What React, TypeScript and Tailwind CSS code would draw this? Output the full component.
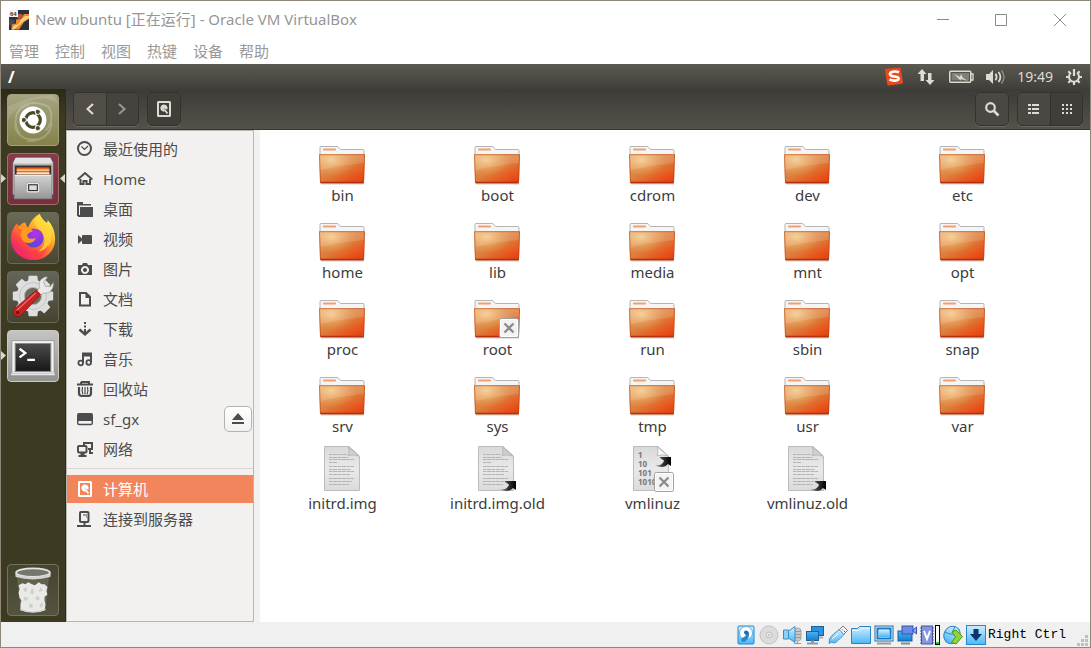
import React from "react";

type IconProps = { className?: string };

const SANS = "font-['Noto_Sans','Noto_Sans_CJK_SC',sans-serif]";

/* ---------- Host window ---------- */

function VirtualBoxLogo() {
  return (
    <svg width="20" height="20" viewBox="0 0 20 20" aria-hidden="true">
      <rect width="20" height="20" fill="#2b2f3c" />
      <path d="M0 9l5 1 1 4-4 2-2-1z" fill="#454a5a" />
      <path d="M7 9.500l5-.5 3-5h5v5l-5 3-5 7.500H2l1-5 4-1z" fill="#e98a2c" />
      <path d="M12 9.500l4-3.500h4v2l-5 3-6 5-4 3.500H3l2-4 4-1z" fill="#ffd07a" />
      <path d="M9 4h4l1 3-4 2.500-2-2z" fill="#c9502a" />
      <rect width="9" height="7" fill="#f4f4f4" />
      <text x="1" y="6" fontSize="6" fontWeight="bold" fontFamily="Liberation Sans" fill="#333">64</text>
    </svg>
  );
}

function TitleBar() {
  return (
    <header className="flex h-[37px] items-center pl-[8px]">
      <VirtualBoxLogo />
      <h1 className="ml-[6px] flex-1 pb-px text-[15px] leading-5 text-[#969696]">
        New ubuntu [正在运行] - Oracle VM VirtualBox
      </h1>
      <div className="flex text-[#8a8a8a]">
        <button aria-label="最小化" className="flex h-8 w-[58px] items-center justify-center">
          <svg width="12" height="12" viewBox="0 0 12 12"><path d="M0 5.500h12" stroke="currentColor" /></svg>
        </button>
        <button aria-label="最大化" className="flex h-8 w-[58px] items-center justify-center">
          <svg width="12" height="12" viewBox="0 0 12 12"><path d="M.5.500h11v11H.5z" fill="none" stroke="currentColor" /></svg>
        </button>
        <button aria-label="关闭" className="flex h-8 w-[60px] items-center justify-center">
          <svg width="12" height="12" viewBox="0 0 12 12"><path d="M0 0l12 12M12 0L0 12" stroke="currentColor" /></svg>
        </button>
      </div>
    </header>
  );
}

function MenuBar() {
  const menus = ["管理", "控制", "视图", "热键", "设备", "帮助"];
  return (
    <nav className="flex h-[26px] items-center gap-4 pl-2 text-[15px] leading-5 text-[#999]">
      {menus.map((m) => (
        <button key={m}>{m}</button>
      ))}
    </nav>
  );
}

/* ---------- Ubuntu top panel ---------- */

function TopPanel() {
  return (
    <div className="flex h-[25px] items-center bg-linear-to-b from-[#5b5950] to-[#403f3a] px-[7px] text-[#dfdbd2]">
      <span className="flex-1 text-[16px] leading-5 font-bold text-white">/</span>
      <div className="flex items-center">
        <svg className="mr-[13px]" width="20" height="20" viewBox="0 0 20 20" aria-label="搜狗输入法">
          <path d="M1 3.500Q.5 2 2 1.800L15 .8q1.500 0 1.800 1.400L19 15q0 1.400-1.300 1.700L5 18.500q-1.500.2-1.800-1.200z" fill="#e94a1c" />
          <path d="M15 5.200C11 3.800 6 4.600 6 7.200c0 3.300 9 1.400 8.600 4.400-.3 2.300-5.600 2.600-9.200 1" fill="none" stroke="#fff" strokeWidth="2.700" />
        </svg>
        <svg className="mr-[14px]" width="18" height="18" viewBox="0 0 18 18" aria-label="网络">
          <path d="M5 1L0.500 6H3.500V13H7V6h2.500zM13 17l4.500-5H14.500V5H11v7H8.500z" fill="currentColor" />
        </svg>
        <svg className="mr-[12px]" width="25" height="14" viewBox="0 0 25 14" aria-label="电池">
          <rect x=".75" y="1.250" width="21" height="11" rx="1" fill="none" stroke="currentColor" strokeWidth="1.500" />
          <rect x="2.500" y="3" width="17.500" height="7.500" fill="#807e77" />
          <path d="M22 4h2v6h-2" fill="none" stroke="currentColor" strokeWidth="1.300" />
          <path d="M5 4l6 3 1-3 2 4 5 3-7-2-.5 1.500L9 8z" fill="currentColor" />
        </svg>
        <svg className="mr-[11px]" width="20" height="16" viewBox="0 0 20 16" aria-label="音量">
          <path d="M0 5h3l4-4v14l-4-4H0z" fill="currentColor" />
          <path d="M9.500 4.800q2.200 3.200 0 6.400M12.500 3q3.800 5 0 10" fill="none" stroke="currentColor" strokeWidth="1.800" />
          <path d="M15.500 1.500q5 6.500 0 13" fill="none" stroke="#8c8a83" strokeWidth="1.500" />
        </svg>
        <time className="mr-[12px] text-[14px] leading-5">19:49</time>
        <button aria-label="系统菜单">
          <svg width="18" height="18" viewBox="0 0 18 18">
            <g stroke="currentColor" strokeWidth="2.200">
              <path d="M9 1v7M1 9h3M14 9h3M9 14v3M3.300 3.300l2 2M14.700 3.300l-2 2M3.300 14.700l2-2M14.700 14.700l-2-2" />
              <path d="M6 4.700a5 5 0 1 0 6 0" fill="none" strokeWidth="2" />
            </g>
          </svg>
        </button>
      </div>
    </div>
  );
}

/* ---------- Launcher ---------- */

function DashIcon() {
  return (
    <svg width="52" height="52" viewBox="0 0 52 52">
      <g fill="none" stroke="#fff" strokeOpacity=".22" strokeWidth="2">
        <path d="M8 24C10 10 24 4 42 12M12 40C4 28 8 14 22 10M30 46C14 48 6 38 8 28M45 28C46 40 36 48 20 48M42 12c5 7 4 18-3 25" />
      </g>
      <path d="M0 12Q25 0 47 0L52 8Q35 0 20 8T0 26z" fill="#fff" opacity=".12" />
      <circle cx="26" cy="26" r="14" fill="#fff" />
      <circle cx="26" cy="26" r="7.500" fill="none" stroke="#4b4a2b" strokeWidth="3.600" />
      <g stroke="#fff" strokeWidth="1.500"><path d="M26 26H14M26 26l6-10.500M26 26l6 10.500" /></g>
      <circle cx="26" cy="26" r="5.700" fill="#fff" />
      <g fill="#4b4a2b" stroke="#fff" strokeWidth="1"><circle cx="16.500" cy="26" r="2.700" /><circle cx="31" cy="17.500" r="2.700" /><circle cx="31" cy="34.500" r="2.700" /></g>
    </svg>
  );
}

function FilesIcon() {
  return (
    <svg width="52" height="52" viewBox="0 0 52 52">
      <defs>
        <linearGradient id="cab" x1="0" y1="0" x2="0" y2="1"><stop offset="0" stopColor="#d4d4d4" /><stop offset="1" stopColor="#969696" /></linearGradient>
      </defs>
      <path d="M8 4h36l3 5v33H5V9z" fill="#b5b5b5" />
      <path d="M8 4h36l2.500 6h-41z" fill="#e2e2e2" />
      <path d="M7 12h38v10H7z" fill="#3b302c" />
      <path d="M9 14h34v8H9z" fill="#e8671d" />
      <path d="M9 16h34v1.500H9zM9 19h34v2H9z" fill="#fde3b8" />
      <path d="M6.500 21.500h39v25h-39z" fill="url(#cab)" stroke="#858585" strokeWidth=".8" />
      <path d="M7 22.300h38" stroke="#eee" />
      <rect x="19" y="29.500" width="14" height="11" rx="2.500" fill="#e6e6e6" stroke="#aaa" />
      <rect x="21.500" y="32" width="9" height="6" fill="#ddd" stroke="#333" strokeWidth="1.200" />
    </svg>
  );
}

function FirefoxIcon() {
  return (
    <svg width="52" height="52" viewBox="0 0 52 52">
      <defs>
        <linearGradient id="fx1" x1=".85" y1=".1" x2=".2" y2=".95"><stop offset="0" stopColor="#fff44f" /><stop offset=".4" stopColor="#ff9a1f" /><stop offset=".7" stopColor="#ff4a3d" /><stop offset="1" stopColor="#e61587" /></linearGradient>
        <radialGradient id="fx2" cx=".6" cy=".25" r=".8"><stop offset="0" stopColor="#b833e1" /><stop offset=".6" stopColor="#7a3ce8" /><stop offset="1" stopColor="#4a4fd0" /></radialGradient>
      </defs>
      <path d="M33 1c2 5 4 6 7 9 2-1 1-2 1-3 5 5 8 12 8 20 0 13-10 22-23 22S3 39 3 27C3 20 6 15 9 11l1 4c3-3 6-5 8-5 0 0 1 4 3 5 3-8 8-12 12-14z" fill="url(#fx1)" />
      <path d="M33 1c3 8 13 13 12 26-1 8-7 12-13 13 5-4 8-10 5-17-3-6-8-8-9-12 0-5 2-8 5-10z" fill="#ffda3e" opacity=".75" />
      <circle cx="27" cy="26" r="10" fill="url(#fx2)" />
      <path d="M9 11c2 3 6 5 9 5 3-1 6 0 8 3-3 1-6 2-6 5 1 4 7 3 9 2-2 6-10 7-14 2-3-5-2-9 1-11-3 0-5-1-7-6z" fill="#ff9a1f" />
      <path d="M4 27c1 10 10 17 20 16 8 0 14-4 18-10-2 10-10 15-17 15C13 48 5 40 4 27z" fill="#ff3750" opacity=".55" />
    </svg>
  );
}

function SettingsIcon() {
  return (
    <svg width="52" height="52" viewBox="0 0 52 52">
      <g fill="#dedede">
        <circle cx="26" cy="25" r="17" />
        {[0, 45, 90, 135].map((a) => (
          <path key={a} d="M21.500 4h9l1 8h-11zM20.500 38h11l-1 8h-9z" transform={`rotate(${a} 26 25)`} />
        ))}
      </g>
      <circle cx="26" cy="25" r="14" fill="none" stroke="#c3c3c3" strokeWidth="1" />
      <circle cx="26" cy="25" r="9" fill="#6b6a58" stroke="#b5b5b5" />
      <path d="M30 20l3-4c-2-5 1-10 7-11l1 1-4 4 2 5 5 0 3-4c1 7-4 12-10 11l-4 3z" fill="#e9e9e9" stroke="#999" strokeWidth=".7" />
      <path d="M29.500 19l4.500 4.500L14 44.500c-2 2.500-5 2-7 .5-2-2-2-5 0-7z" fill="#c92222" stroke="#8f1212" strokeWidth=".8" />
      <path d="M29 21.500L9 40" stroke="#e96a6a" strokeWidth="1.300" />
      <circle cx="10" cy="42" r="1.800" fill="#7c0e0e" />
    </svg>
  );
}

function TerminalIcon() {
  return (
    <svg width="52" height="52" viewBox="0 0 52 52">
      <defs><linearGradient id="term" x1="0" y1="0" x2="0" y2="1"><stop offset="0" stopColor="#4c4c4c" /><stop offset="1" stopColor="#161616" /></linearGradient></defs>
      <path d="M4 10h44v32l1.500 4.500H2.500L4 42z" fill="#f2f2f2" stroke="#8b8b8b" strokeWidth=".8" />
      <path d="M4 42.500h44M3.500 44.500h45" stroke="#c2c2c2" />
      <rect x="7.500" y="13" width="37" height="29" fill="url(#term)" stroke="#888" />
      <path d="M12 18.500l6 4.500-6 4.500" fill="none" stroke="#fff" strokeWidth="2.400" />
      <path d="M20 30h8" stroke="#fff" strokeWidth="2.400" />
    </svg>
  );
}

function TrashIcon() {
  return (
    <svg width="52" height="52" viewBox="0 0 52 52">
      <path d="M9 10l4 36q13 5 26 0l4-36z" fill="#9b9a8c" opacity=".3" />
      <ellipse cx="26" cy="8" rx="17.500" ry="4.500" fill="#77766c" stroke="#e5e5e5" strokeWidth="2" />
      <path d="M7.500 9q18 7 37 0l-.5 3.500q-18 5-36 0z" fill="#d2d2d0" />
      <path d="M11 21l4-2 3 1 3-2 4 2 3 1 4-3 3 2 3 0 3 3-1 4 1 4-3 2 0 4 1 4-1 6q-12 4-25 0l0-6 1-4-2-3-1-5 1-4z" fill="#e9e9e7" />
      <g fill="#c5c5c1" opacity=".75">
        <path d="M16 25l3-2 1 4-3 1zM25 24l2 3-1 4-3-2zM34 23l2 4-4 1zM17 33l4 1-1 3-4 0zM28 34l4-2 1 4-3 1zM22 40l4 1-1 4-3-1zM33 41l3-2 0 5-3 0z" />
      </g>
      <path d="M13 46q13 6 26 0" fill="none" stroke="#d8d8d8" strokeWidth="1.500" />
    </svg>
  );
}

type LauncherApp = { name: string; Icon: () => React.ReactElement; tile: string; running?: boolean; focused?: boolean };

const APPS: LauncherApp[] = [
  { name: "Dash", Icon: DashIcon, tile: "bg-linear-to-b from-[#a6a482] to-[#858349] border-[#a3a17c]" },
  { name: "文件", Icon: FilesIcon, tile: "bg-linear-to-b from-[#843d48] to-[#75303e] border-[#a46a72]", running: true, focused: true },
  { name: "Firefox", Icon: FirefoxIcon, tile: "bg-linear-to-b from-[#6a6a58] to-[#494732] border-[#6a6956]" },
  { name: "系统设置", Icon: SettingsIcon, tile: "bg-linear-to-b from-[#66655a] to-[#45442f] border-[#6a6956]" },
  { name: "终端", Icon: TerminalIcon, tile: "bg-linear-to-b from-[#c4c4c3] to-[#929291] border-[#c8c8c8]", running: true },
];

function LauncherItem({ app }: { app: LauncherApp }) {
  const { Icon } = app;
  return (
    <li className="relative flex justify-center">
      {app.running && (
        <svg className="absolute top-[21px] left-0" width="5" height="9" viewBox="0 0 5 9"><path d="M0 0l5 4.500L0 9z" fill="#d9d7d0" /></svg>
      )}
      <button aria-label={app.name} className={`flex size-[52px] items-center justify-center overflow-hidden rounded border ${app.tile}`}>
        <Icon />
      </button>
      {app.focused && (
        <svg className="absolute top-[21px] right-0" width="5" height="9" viewBox="0 0 5 9"><path d="M5 0L0 4.500 5 9z" fill="#d9d7d0" /></svg>
      )}
    </li>
  );
}

function Launcher() {
  return (
    <nav className="flex w-[65px] shrink-0 flex-col justify-between border-r border-[#2e2c1c] bg-linear-to-b from-[#2b2a17] via-[#3d3a22] via-5% to-[#3d3a22] pt-[5px] pb-[6px]">
      <ul className="flex flex-col gap-[7px]">
        {APPS.map((a) => (
          <LauncherItem key={a.name} app={a} />
        ))}
      </ul>
      <ul>
        <LauncherItem app={{ name: "回收站", Icon: TrashIcon, tile: "bg-linear-to-b from-[#45442d] to-[#545340] border-[#74735f]" }} />
      </ul>
    </nav>
  );
}

/* ---------- File manager toolbar ---------- */

const line = { fill: "none", stroke: "currentColor", strokeWidth: 2 };

const DISK_ART = (
  <>
    <rect x="2" y="1" width="12" height="14" rx=".5" {...line} />
    <path d="M8 3.500A3.500 3.500 0 1 0 9 10.300L7.500 7.500 11.300 8.400A3.500 3.500 0 0 0 8 3.500z" fill="currentColor" />
    <path d="M8.500 8.500l3 4" {...line} strokeWidth={1.700} />
  </>
);

function DiskIcon({ className }: IconProps) {
  return (
    <svg className={className} width="16" height="16" viewBox="0 0 16 16" aria-hidden="true">{DISK_ART}</svg>
  );
}

function Toolbar() {
  const group = "flex h-[34px] overflow-hidden rounded-[5px] border border-[#33322e] shadow-[0_1px_0_#6a6861]";
  const half = "flex w-8 items-center justify-center";
  return (
    <div className="flex h-[41px] items-center justify-between border-b border-[#36352f] bg-linear-to-b from-[#3d3c38] to-[#545149] pr-[7px] pl-[7px] text-[#dfdbd2]">
      <div className="flex gap-2">
        <div className={group}>
          <button aria-label="后退" className={`${half} bg-[#504e47]`}>
            <svg width="9" height="12" viewBox="0 0 9 12"><path d="M7 1L1.500 6 7 11" fill="none" stroke="currentColor" strokeWidth="2.200" /></svg>
          </button>
          <button aria-label="前进" className={`${half} border-l border-[#33322e] bg-[#45433e] text-[#96938b]`}>
            <svg width="9" height="12" viewBox="0 0 9 12"><path d="M1 1l5.500 5L1 11" fill="none" stroke="currentColor" strokeWidth="2.200" /></svg>
          </button>
        </div>
        <div className={group}>
          <button aria-label="计算机" className={`${half} bg-[#403e39]`}><DiskIcon /></button>
        </div>
      </div>
      <div className="flex gap-2">
        <div className={group}>
          <button aria-label="搜索" className={`${half} bg-[#4a4842]`}>
            <svg width="16" height="16" viewBox="0 0 16 16"><circle cx="6.500" cy="6.500" r="4.300" fill="none" stroke="currentColor" strokeWidth="2.200" /><path d="M9.500 9.500l5 5" stroke="currentColor" strokeWidth="2.600" /></svg>
          </button>
        </div>
        <div className={group}>
          <button aria-label="列表视图" className={`${half} bg-[#4a4842]`}>
            <svg width="12" height="10" viewBox="0 0 12 10" fill="currentColor"><path d="M0 0h3v2H0zM4 0h7v2H4zM0 4h3v2H0zM4 4h7v2H4zM0 8h3v2H0zM4 8h7v2H4z" /></svg>
          </button>
          <button aria-label="图标视图" className={`${half} border-l border-[#33322e] bg-[#403e39]`}>
            <svg width="10" height="10" viewBox="0 0 10 10" fill="currentColor"><path d="M0 0h2v2H0zM4 0h2v2H4zM8 0h2v2H8zM0 4h2v2H0zM4 4h2v2H4zM8 4h2v2H8zM0 8h2v2H0zM4 8h2v2H4zM8 8h2v2H8z" /></svg>
          </button>
        </div>
      </div>
    </div>
  );
}

/* ---------- Sidebar ---------- */

const PLACES: { label: string; art: React.ReactNode; ejectable?: boolean }[] = [
  { label: "最近使用的", art: <><circle cx="7.500" cy="7.500" r="6.500" {...line} /><path d="M4.500 5.500L7.500 8.500 11 5" {...line} strokeWidth={1.200} /></> },
  { label: "Home", art: <><path d="M.7 8.500L8 2 15.300 8.500" {...line} /><path d="M3.500 8v5h3v-3h3v3H13V8" {...line} /></> },
  { label: "桌面", art: <path d="M0 1h6v2h8v1.500H2V15H0zM3 6h13v10H1V14h2z" fill="currentColor" /> },
  { label: "视频", art: <><rect x="5" y="4" width="10" height="9" rx="1" fill="currentColor" /><path d="M1 4v9l4-3.500v-2z" fill="currentColor" /></> },
  { label: "图片", art: <path fillRule="evenodd" d="M1 4h4l1-2h4l1 2h4v10H1zM8 5a4 4 0 1 0 .01 0zM8 7a2 2 0 1 1-.01 0z" fill="currentColor" /> },
  { label: "文档", art: <><path d="M3 2h6l4 4v8.500H3z" {...line} /><path d="M8.500 2v5H13L9 2z" fill="currentColor" /></> },
  { label: "下载", art: <><path d="M8 1v2M8 4.500v2M8 8v5" {...line} /><path d="M2.500 8.500L8 13.500l5.500-5" {...line} strokeWidth={2.400} /></> },
  { label: "音乐", art: <><path d="M6 12V2.500h8V11M6 4.500h8" {...line} /><circle cx="3.700" cy="12" r="2.300" {...line} strokeWidth={1.800} /><circle cx="11.700" cy="11.500" r="2.300" {...line} strokeWidth={1.800} /></> },
  { label: "回收站", art: <><path d="M0 3.500h16M4 1h8V3M4 1V3" {...line} /><path d="M2 6v6q0 3 3 3h6q3 0 3-3V6" {...line} strokeWidth={2.200} /><path d="M5.500 6q-1 4 .5 7.500M8 6v7.500M10.500 6q1 4-.5 7.500" {...line} strokeWidth={1.200} /></> },
  { label: "sf_gx", ejectable: true, art: <><path d="M0 10V4q0-2 2-2h12q2 0 2 2v6z" fill="currentColor" /><path d="M.7 9v3q0 1.500 1.500 1.500h11.600q1.500 0 1.500-1.500V9" {...line} strokeWidth={1.400} /></> },
  { label: "网络", art: <><path d="M7 5V2h8v6h-4" {...line} /><rect x="1" y="5" width="8.500" height="6.500" rx="1" {...line} /><path d="M3.500 12h4v2h2v2H1.500v-2h2zM12 9h2v2h2v2h-4z" fill="currentColor" /></> },
];

function Place({ label, art, ejectable, selected }: { label: string; art: React.ReactNode; ejectable?: boolean; selected?: boolean }) {
  return (
    <li className={`flex items-center pr-px pl-[10px] ${selected ? "mb-px h-7 bg-[#f2855b] text-white" : "h-[30px] text-[#4c4c4c]"}`}>
      <a href="#" className="flex flex-1 items-center gap-[10px] text-[15px] leading-5">
        <svg width="16" height="16" viewBox="0 0 16 16" aria-hidden="true">{art}</svg>
        {label}
      </a>
      {ejectable && (
        <button aria-label={`弹出 ${label}`} className="flex h-[26px] w-7 items-center justify-center rounded-[5px] border border-[#b5b3ae] bg-linear-to-b from-white to-[#f2f1f0]">
          <svg width="12" height="12" viewBox="0 0 12 12"><path d="M6 0l6 7H0zM0 9h12v2H0z" fill="currentColor" /></svg>
        </button>
      )}
    </li>
  );
}

function Sidebar() {
  return (
    <aside className="w-[188px] shrink-0 border border-[#b9b7b3] bg-[#f2f1f0] pt-[3px]">
      <ul>{PLACES.map((p) => <Place key={p.label} {...p} />)}</ul>
      <hr className="mt-1 mb-[6px] border-[#d8d6d3]" />
      <ul>
        <Place label="计算机" selected art={DISK_ART} />
        <Place label="连接到服务器" art={<><rect x="3" y="1" width="8.500" height="10" rx="1" {...line} /><path d="M6 4h4M9 6h1" {...line} strokeWidth={1} /><path d="M7.500 11v4M0 15h14" {...line} /></>} />
      </ul>
    </aside>
  );
}

/* ---------- Icon view ---------- */

type Entry = { name: string; kind?: "folder" | "text" | "binary"; link?: boolean; locked?: boolean };

const ENTRIES: Entry[] = [
  { name: "bin" }, { name: "boot" }, { name: "cdrom" }, { name: "dev" }, { name: "etc" },
  { name: "home" }, { name: "lib" }, { name: "media" }, { name: "mnt" }, { name: "opt" },
  { name: "proc" }, { name: "root", locked: true }, { name: "run" }, { name: "sbin" }, { name: "snap" },
  { name: "srv" }, { name: "sys" }, { name: "tmp" }, { name: "usr" }, { name: "var" },
  { name: "initrd.img", kind: "text" },
  { name: "initrd.img.old", kind: "text", link: true },
  { name: "vmlinuz", kind: "binary", link: true, locked: true },
  { name: "vmlinuz.old", kind: "text", link: true },
];

function FolderArt() {
  return (
    <g transform="translate(0 1)">
      <path d="M2 18V9.500q0-1 1-1h16q1 0 1.500.7l2 2.300H45q1 0 1 1V18z" fill="#f5f5f5" stroke="#b4b4b4" />
      <rect x="5" y="10.500" width="13" height="2" rx=".8" fill="#f3a06c" />
      <path d="M3 45.500h43" stroke="#000" strokeOpacity=".2" strokeWidth="2" />
      <path d="M1 17q0-.8.800-.8h44.400q.8 0 .8.800L46 44.500q0 .7-1 .7H3q-1 0-1-.7z" fill="url(#folder)" />
      <path d="M1 17q0-.8.800-.8h44.400q.8 0 .8.800L46 44.500q0 .7-1 .7H3q-1 0-1-.7z" fill="url(#folderGlow)" />
      <path d="M2 17h44v8Q24 27 2.400 32z" fill="#fff" opacity=".13" />
      <path d="M1.500 16.700h45l-1 27.800h-43z" fill="none" stroke="#b8421a" strokeOpacity=".55" />
      <path d="M2.500 44.500h43" stroke="#b6300c" strokeWidth="1.500" />
    </g>
  );
}

function PageArt({ binary }: { binary?: boolean }) {
  return (
    <>
      <path d="M6.500 1.500H31l10.500 9.500v34.500h-35z" fill="url(#page)" stroke="#bcbcbc" />
      <path d="M30.500 2q1.500 5-.5 8.500 5-1.500 11 .5z" fill={binary ? "#fafafa" : "#cfcfcf"} stroke="#b0b0b0" strokeWidth=".8" />
      {binary ? (
        <g fontFamily="Noto Sans" fontSize="8" fontWeight="bold" fill="#777">
          <text x="11" y="13">1</text><text x="11" y="22">10</text><text x="11" y="31">101</text><text x="11" y="40">1010</text>
        </g>
      ) : (
        <path d="M11 9.500h18M11 12.500h19M11 14.500h25M11 17.500h8M11 21.500h25M11 24.500h22M11 26.500h25M11 29.500h21M11 33.500h25M11 36.500h23M11 39.500h20" stroke="#b4b4b4" strokeDasharray="3 .5 5 .5" />
      )}
    </>
  );
}

function EntryIcon({ entry }: { entry: Entry }) {
  const binary = entry.kind === "binary";
  return (
    <svg width="48" height="48" viewBox="1 0 48 48" overflow="visible" aria-hidden="true">
      {entry.kind ? <PageArt binary={binary} /> : <FolderArt />}
      {entry.link && (
        <g transform={binary ? "translate(0 -24)" : undefined}>
          <path d="M44 36v9l-3-2Q37 48 28 44.500q6 .5 8.500-3.500l.5-1.500-4-2.500V36z" fill="url(#arrow)" />
        </g>
      )}
      {entry.locked && (
        <g transform={entry.kind ? "translate(1 0)" : undefined}>
          <rect x="26.500" y="27.500" width="19" height="19" rx="2" fill="#f3f3f3" stroke="#a0a0a0" />
          <rect x="27.500" y="28.500" width="17" height="17" rx="1" fill="none" stroke="#fff" />
          <path d="M31.500 32.500l9 9M40.500 32.500l-9 9" stroke="#8b8b8b" strokeWidth="2.300" />
        </g>
      )}
    </svg>
  );
}

function IconView() {
  return (
    <main className="flex-1 bg-white pt-[7px] pl-[5px]">
      <svg width="0" height="0" className="absolute" aria-hidden="true">
        <defs>
          <linearGradient id="folder" x1=".1" y1="0" x2=".9" y2="1"><stop offset="0" stopColor="#e9a56a" /><stop offset=".5" stopColor="#dd7f3c" /><stop offset=".85" stopColor="#e94e18" /><stop offset="1" stopColor="#da4413" /></linearGradient>
          <radialGradient id="folderGlow" cx=".27" cy=".2" r=".55"><stop offset="0" stopColor="#f8d898" stopOpacity=".8" /><stop offset="1" stopColor="#e8a860" stopOpacity="0" /></radialGradient>
          <linearGradient id="page" x1="0" y1="0" x2="0" y2="1"><stop offset="0" stopColor="#d9d9d9" /><stop offset=".5" stopColor="#e9e9e9" /><stop offset="1" stopColor="#dbdbdb" /></linearGradient>
          <linearGradient id="arrow" x1="0" y1="0" x2="1" y2="0"><stop offset="0" stopColor="#aaa" /><stop offset=".5" stopColor="#333" /><stop offset="1" stopColor="#000" /></linearGradient>
        </defs>
      </svg>
      <ul className="grid grid-cols-[repeat(auto-fill,155px)] gap-y-[9px]">
        {ENTRIES.map((e) => (
          <li key={e.name} className="flex justify-center">
            <button className="flex flex-col items-center text-[15px] leading-5 text-[#3c3c3c]">
              <EntryIcon entry={e} />
              {e.name}
            </button>
          </li>
        ))}
      </ul>
    </main>
  );
}

/* ---------- VirtualBox status bar ---------- */

const STATUS: { label: string; width: number; art: React.ReactNode }[] = [
  { label: "硬盘", width: 20, art: <><rect x="2" y="1" width="16" height="18" rx="1" fill="url(#sky)" stroke="#2187d0" /><circle cx="10" cy="8" r="6.500" fill="#fff" stroke="#62b2e8" /><path d="M11 6q3 1 2 5-1 4-5 6l-3-1q0-3 3-4 2-1 2-4z" fill="#2b86cc" /><circle cx="10" cy="7.500" r="2" fill="#176bb3" /></> },
  { label: "光驱", width: 20, art: <><circle cx="10" cy="10" r="9" fill="#dcdcdc" stroke="#c2c2c2" /><circle cx="10" cy="10" r="3" fill="#e8e8e8" stroke="#c0c0c0" /><circle cx="10" cy="10" r="1" fill="#bbb" /></> },
  { label: "声音", width: 20, art: <><rect x="12" y="3" width="7" height="13" rx="3" fill="#c8c8c8" stroke="#aaa" /><path d="M13 6.500h6M13 9.500h6M13 12.500h6M15.500 16v3M12 18.500h7" stroke="#989898" /><path d="M1.500 5h5v9h-5z" fill="#8fd0f8" stroke="#3a8dc9" /><path d="M6.500 6L13 1.500v16L6.500 13z" fill="url(#sky)" stroke="#3a8dc9" /></> },
  { label: "网络", width: 20, art: <><rect x="6.500" y="1.500" width="12" height="9" fill="#2b94df" stroke="#1565a5" /><path d="M10 12.500h8" stroke="#aaa" strokeWidth="2" /><rect x="1.500" y="6.500" width="12" height="9" fill="url(#deep)" stroke="#1565a5" /><path d="M2 18.500h11M6 16.500h3" stroke="#999" strokeWidth="2" /></> },
  { label: "USB", width: 20, art: <><path d="M11 5l4-4 4.500 4.500-4 4z" fill="#f7f7f7" stroke="#777" /><path d="M14 4.500l1 1M16 6l1 1" stroke="#555" /><path d="M1 18.500q-.5-5 3-8l7-6 5 5-6 6q-4 4-6 1.500z" fill="url(#sky)" stroke="#4296cd" /><path d="M4 14l6-5" stroke="#fff" /></> },
  { label: "共享文件夹", width: 20, art: <><path d="M.5 18.500v-15h6l2-2h11v17z" fill="url(#sky)" stroke="#2a83c4" /><path d="M1 5.500h8l2-2h8" fill="none" stroke="#e3f5ff" /></> },
  { label: "显示", width: 20, art: <><rect x="1" y="1" width="18" height="15" fill="#e9f5fd" stroke="#176fae" /><rect x="3.500" y="3.500" width="13" height="10" fill="#fff" stroke="#137bc7" strokeWidth="2" /><rect x="5" y="5" width="10" height="7" fill="url(#sky)" /><path d="M3 18.500h14" stroke="#9b9b9b" strokeWidth="2" /></> },
  { label: "录像", width: 20, art: <><rect x="1" y="6" width="14" height="10" fill="url(#deep)" stroke="#1565a5" /><rect x="5" y="1" width="11" height="8" fill="#6c8be4" stroke="#3753b5" /><path d="M16 5l3.500-3v7L16 6z" fill="#8ca6f0" stroke="#3753b5" /><path d="M4 18.500h9" stroke="#888" strokeWidth="2" /></> },
  { label: "虚拟化", width: 14, art: <><path d="M0 3h14M0 6h14M0 9h14M0 12h14M0 15h14M0 18h14" stroke="#5060ad" /><rect x="1.500" y="1" width="11" height="18" fill="#8596dd" stroke="#4655aa" /><path d="M4 6l3 8 3-8" fill="none" stroke="#fff" strokeWidth="2" /></> },
];

function StatusBar() {
  return (
    <footer className="flex h-[25px] items-center justify-end bg-[#f0f0f0] pr-px">
      <svg width="0" height="0" className="absolute" aria-hidden="true">
        <defs>
          <linearGradient id="sky" x1="0" y1="0" x2="0" y2="1"><stop offset="0" stopColor="#cfeeff" /><stop offset="1" stopColor="#4db6f5" /></linearGradient>
          <linearGradient id="deep" x1="0" y1="0" x2="0" y2="1"><stop offset="0" stopColor="#48b5f2" /><stop offset="1" stopColor="#157dcb" /></linearGradient>
        </defs>
      </svg>
      <div className="flex items-center gap-[3px]">
        {STATUS.map((s) => (
          <svg key={s.label} width={s.width} height="20" viewBox={`0 0 ${s.width} 20`} aria-label={s.label}>{s.art}</svg>
        ))}
      </div>
      <svg className="ml-px" width="5" height="20" viewBox="0 0 5 20" aria-label="处理器负载"><rect x=".5" y=".5" width="4" height="19" fill="#fff" stroke="#000" /><path d="M1 17h3v2H1z" fill="#20d020" /></svg>
      <svg className="mr-[3px] ml-[3px]" width="20" height="20" viewBox="0 0 20 20" aria-label="鼠标集成">
        <ellipse cx="9" cy="10" rx="8" ry="9" fill="url(#sky)" stroke="#2785bf" transform="rotate(25 9 10)" />
        <path d="M12 1.500L9 8M2 7q7 4 14 1" fill="none" stroke="#2785bf" />
        <path d="M9 7l4-2 6.500 6.500-6.500 7.500-4.500-1.500 4-5.500z" fill="#8fd43a" stroke="#4c9617" />
      </svg>
      <svg className="mr-[2px]" width="20" height="20" viewBox="0 0 20 20" aria-label="键盘捕获"><rect x=".5" y=".5" width="19" height="19" fill="url(#sky)" stroke="#2289cc" /><path d="M7.500 4h5v5H16l-6 7-6-7h3.500z" fill="#09396c" /></svg>
      <span className="mr-[11px] font-['Liberation_Mono',monospace] text-[13px] leading-5 text-black">Right Ctrl</span>
      <svg className="self-end" width="12" height="12" viewBox="0 0 12 12" aria-hidden="true" fill="#bfbfbf"><path d="M8 0h3v3H8zM4 4h3v3H4zM8 4h3v3H8zM0 8h3v3H0zM4 8h3v3H4zM8 8h3v3H8z" /></svg>
    </footer>
  );
}

export default function App() {
  return (
    <div className={`${SANS} flex min-h-screen flex-col border border-[#8f8778] bg-white`}>
      <TitleBar />
      <MenuBar />
      <TopPanel />
      <div className="flex flex-1">
        <Launcher />
        <div className="flex min-w-0 flex-1 flex-col">
          <Toolbar />
          <div className="flex flex-1 bg-[#f2f1f0]">
            <Sidebar />
            <div className="w-[6px] shrink-0" />
            <IconView />
          </div>
        </div>
      </div>
      <StatusBar />
    </div>
  );
}
